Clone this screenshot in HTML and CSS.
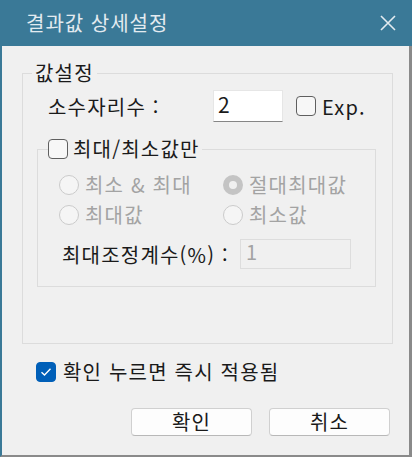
FILE: index.html
```html
<!DOCTYPE html>
<html lang="ko">
<head>
    <meta charset="UTF-8">
    <title>결과값 상세설정</title>
    <link rel="stylesheet" href="styles.css">
</head>
<body>
    <div class="window">
        <div class="titlebar">
            <span class="title">결과값 상세설정</span>
            <svg class="close" width="18" height="18" viewBox="0 0 18 18">
                <path d="M2 2 L16 16 M16 2 L2 16" stroke="#e3ebf0" stroke-width="1.6" fill="none"/>
            </svg>
        </div>

        <div class="dialog-body">
            <!-- 값설정 -->
            <fieldset class="group">
                <legend class="group-title">값설정</legend>

                <div class="digits-row">
                    <span class="digits-label">소수자리수 :</span>
                    <div class="edit">2</div>
                    <span class="check"></span>
                    <span class="exp-label">Exp.</span>
                </div>

                <fieldset class="subgroup">
                    <legend class="subgroup-title">
                        <span class="check"></span>
                        <span>최대/최소값만</span>
                    </legend>

                    <div class="radio-grid">
                        <div class="radio-item"><span class="radio"></span>최소 &amp; 최대</div>
                        <div class="radio-item"><span class="radio selected"></span>절대최대값</div>
                        <div class="radio-item"><span class="radio"></span>최대값</div>
                        <div class="radio-item"><span class="radio"></span>최소값</div>
                    </div>

                    <div class="factor-row">
                        <span class="factor-label">최대조정계수(%) :</span>
                        <div class="edit disabled">1</div>
                    </div>
                </fieldset>
            </fieldset>

            <div class="apply-row">
                <span class="check checked">
                    <svg width="12" height="10" viewBox="0 0 12 10">
                        <path d="M1.5 5.2 L4.5 8 L10.5 1.8" stroke="#fff" stroke-width="1.4" fill="none"/>
                    </svg>
                </span>
                <span>확인 누르면 즉시 적용됨</span>
            </div>

            <div class="buttons">
                <button class="btn">확인</button>
                <button class="btn">취소</button>
            </div>
        </div>
    </div>
</body>
</html>
```

FILE: styles.css
```css
* {
    margin: 0;
    padding: 0;
    box-sizing: border-box;
}

body {
    font-family: "Noto Sans CJK KR", "Noto Sans", sans-serif;
    font-size: 20px;
    letter-spacing: 1.2px;
    color: #1a1a1a;
    background: #f0f0f0;
}

/* Window frame */
.window {
    width: 412px;
    height: 457px;
    display: flex;
    flex-direction: column;
}

.titlebar {
    height: 46px;
    background: #3a7997;
    display: flex;
    align-items: center;
    justify-content: space-between;
    padding: 0 15px 0 26px;
}

.title {
    color: #e3ebf0;
    font-size: 20px;
    line-height: 24px;
    letter-spacing: 1px;
}

.dialog-body {
    flex: 1;
    background: #f0f0f0;
    border-left: 2px solid #3a7997;
    border-right: 3px solid #8a8a8a;
    border-bottom: 2px solid #8a8a8a;
    padding: 15px 16px 0 20px;
}

/* Group boxes */
.group {
    border: 1px solid #dcdcdc;
    padding: 5px 16px 56px 13px;
}

.group-title {
    margin-left: -4px;
    padding: 0 3px;
    line-height: 24px;
}

.digits-row {
    display: flex;
    align-items: center;
    height: 32px;
}

.digits-label {
    width: 165px;
    margin-left: 12px;
}

.edit {
    width: 70px;
    height: 32px;
    background: #fff;
    border: 1px solid #e6e6e6;
    border-bottom: 1px solid #868686;
    font-size: 21px;
    line-height: 26px;
    padding-left: 4px;
    color: #1a1a1a;
}

.digits-row .check {
    margin-left: 13px;
}

.exp-label {
    margin-left: 6px;
}

.check {
    width: 20px;
    height: 20px;
    border: 1px solid #5f5f5f;
    border-radius: 4px;
    background: #f7f7f7;
    display: inline-flex;
    align-items: center;
    justify-content: center;
    flex-shrink: 0;
}

.check.checked {
    background: #005fb8;
    border-color: #005fb8;
}

.subgroup {
    border: 1px solid #dcdcdc;
    margin: 15px 0 0 1px;
    padding: 14px 0 17px 21px;
}

.subgroup-title {
    margin-left: -11px;
    padding: 0 2px 0 0;
    display: flex;
    align-items: center;
    gap: 5px;
    line-height: 24px;
}

.radio-grid {
    display: grid;
    grid-template-columns: 164px 1fr;
    row-gap: 10px;
    color: #a3a3a3;
}

.radio-item {
    display: flex;
    align-items: center;
    gap: 6px;
    height: 20px;
    line-height: 20px;
}

.radio {
    width: 20px;
    height: 20px;
    border-radius: 50%;
    border: 1px solid #cbcbcb;
    background: #f5f5f5;
    flex-shrink: 0;
}

.radio.selected {
    border: 6px solid #c4c4c4;
    background: #f0f0f0;
}

.factor-row {
    display: flex;
    align-items: center;
    height: 30px;
    margin-top: 14px;
}

.factor-label {
    width: 178px;
    margin-left: 3px;
}

.edit.disabled {
    width: 111px;
    height: 30px;
    background: #f0f0f0;
    border: 1px solid #dddddd;
    color: #a3a3a3;
    font-size: 20px;
    line-height: 24px;
    padding-left: 5px;
}

/* Bottom */
.apply-row {
    display: flex;
    align-items: center;
    gap: 7px;
    height: 24px;
    margin: 16px 0 0 14px;
    line-height: 24px;
}

.buttons {
    display: flex;
    justify-content: flex-end;
    gap: 17px;
    margin: 24px 3px 0 0;
}

.btn {
    width: 121px;
    height: 28px;
    background: #fdfdfd;
    border: 1px solid #d0d0d0;
    border-bottom-color: #b8b8b8;
    border-radius: 4px;
    font-family: inherit;
    font-size: 20px;
    line-height: 24px;
    letter-spacing: 1.2px;
    color: #1a1a1a;
}
```
